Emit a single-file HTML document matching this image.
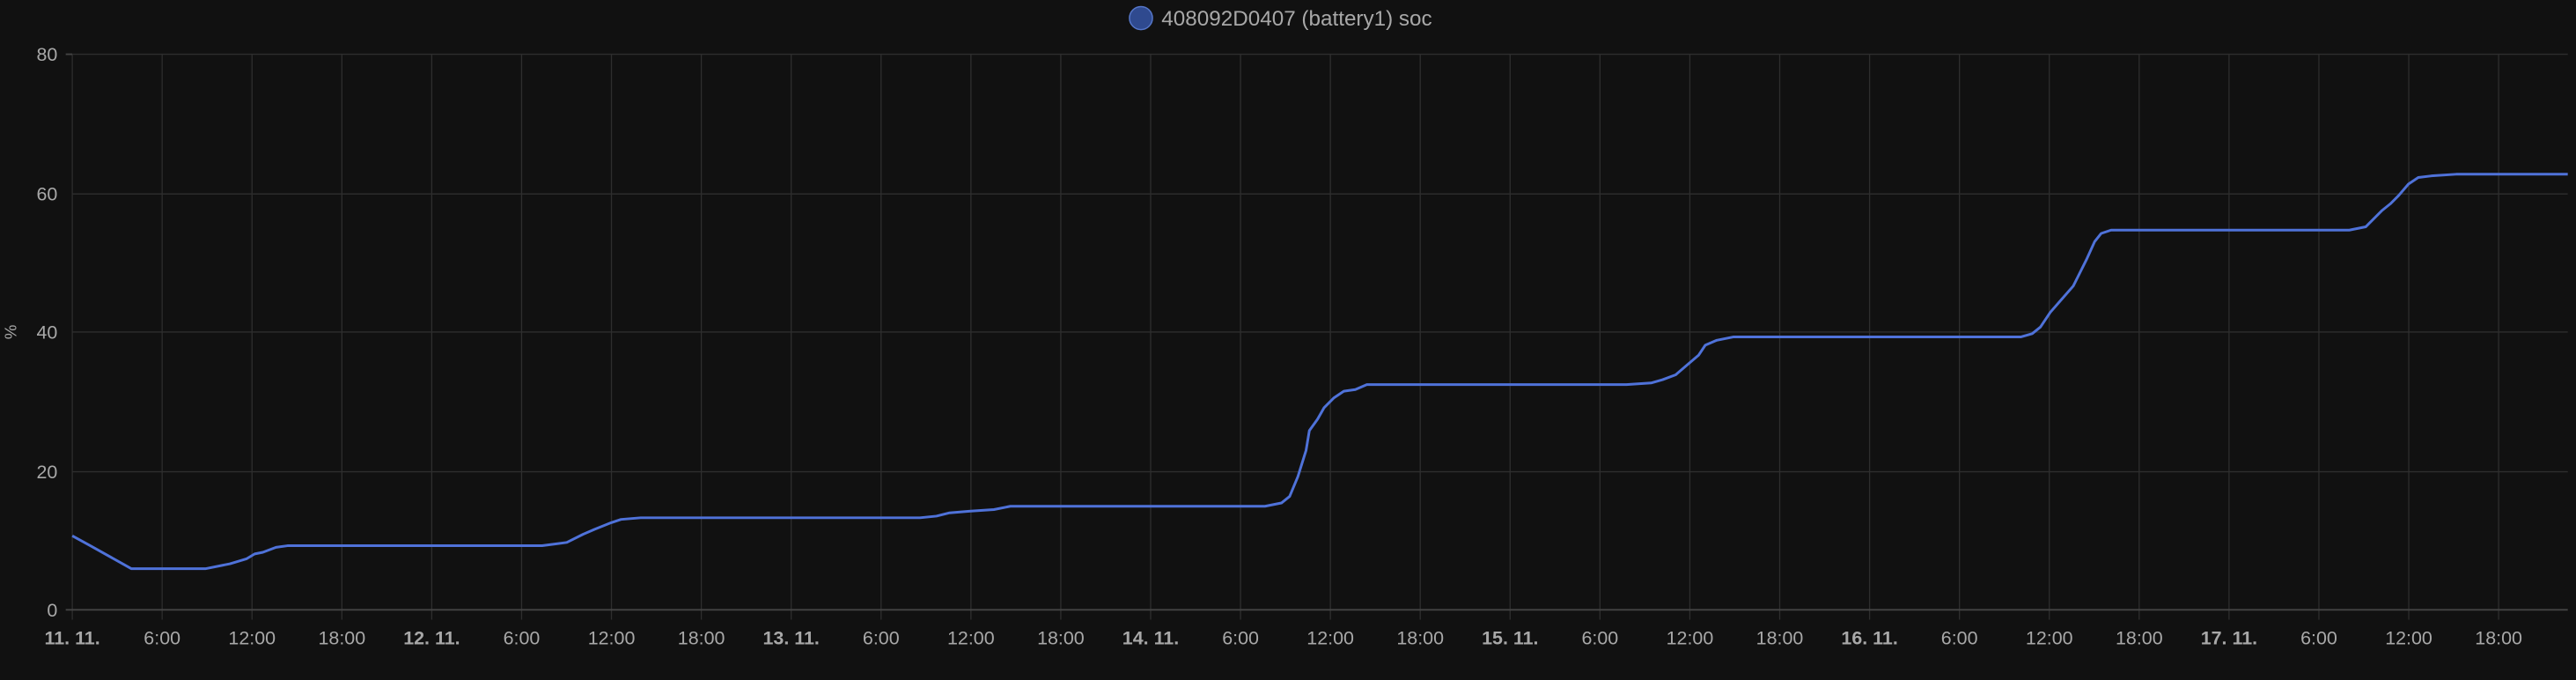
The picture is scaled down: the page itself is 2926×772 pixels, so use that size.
<!DOCTYPE html>
<html><head><meta charset="utf-8"><style>
html,body{margin:0;padding:0;background:#111111;width:2926px;height:772px;overflow:hidden}
svg{display:block}
text{font-family:"Liberation Sans",sans-serif;fill:#a8a8a8}
</style></head><body>
<svg width="2926" height="772" viewBox="0 0 1568 413.7" preserveAspectRatio="none">
<rect width="1568" height="413.7" fill="#111111"/>
<g stroke="#2e2e2e" stroke-width="0.7">
<line x1="44" y1="33" x2="1563" y2="33"/>
<line x1="44" y1="118" x2="1563" y2="118"/>
<line x1="44" y1="202" x2="1563" y2="202"/>
<line x1="44" y1="287" x2="1563" y2="287"/>
<line x1="44" y1="33" x2="44" y2="377"/>
<line x1="98.7" y1="33" x2="98.7" y2="377"/>
<line x1="153.4" y1="33" x2="153.4" y2="377"/>
<line x1="208.1" y1="33" x2="208.1" y2="377"/>
<line x1="262.8" y1="33" x2="262.8" y2="377"/>
<line x1="317.5" y1="33" x2="317.5" y2="377"/>
<line x1="372.2" y1="33" x2="372.2" y2="377"/>
<line x1="426.9" y1="33" x2="426.9" y2="377"/>
<line x1="481.6" y1="33" x2="481.6" y2="377"/>
<line x1="536.3" y1="33" x2="536.3" y2="377"/>
<line x1="591" y1="33" x2="591" y2="377"/>
<line x1="645.7" y1="33" x2="645.7" y2="377"/>
<line x1="700.4" y1="33" x2="700.4" y2="377"/>
<line x1="755.1" y1="33" x2="755.1" y2="377"/>
<line x1="809.8" y1="33" x2="809.8" y2="377"/>
<line x1="864.5" y1="33" x2="864.5" y2="377"/>
<line x1="919.2" y1="33" x2="919.2" y2="377"/>
<line x1="973.9" y1="33" x2="973.9" y2="377"/>
<line x1="1028.6" y1="33" x2="1028.6" y2="377"/>
<line x1="1083.3" y1="33" x2="1083.3" y2="377"/>
<line x1="1138" y1="33" x2="1138" y2="377"/>
<line x1="1192.7" y1="33" x2="1192.7" y2="377"/>
<line x1="1247.4" y1="33" x2="1247.4" y2="377"/>
<line x1="1302.1" y1="33" x2="1302.1" y2="377"/>
<line x1="1356.8" y1="33" x2="1356.8" y2="377"/>
<line x1="1411.5" y1="33" x2="1411.5" y2="377"/>
<line x1="1466.2" y1="33" x2="1466.2" y2="377"/>
<line x1="1520.9" y1="33" x2="1520.9" y2="377"/>
</g>
<line x1="40" y1="371" x2="1563" y2="371" stroke="#444" stroke-width="1"/>
<line x1="40" y1="33" x2="44" y2="33" stroke="#444" stroke-width="1"/>
<g font-size="11.5" text-anchor="end">
<text x="35" y="37">80</text><text x="35" y="122">60</text><text x="35" y="206">40</text><text x="35" y="291">20</text><text x="35" y="375">0</text>
</g>
<text x="10" y="202" font-size="10" transform="rotate(-90 10 202)" text-anchor="middle">%</text>
<g font-size="11.5" text-anchor="middle">
<text x="44" y="392" font-weight="bold">11. 11.</text>
<text x="98.7" y="392">6:00</text><text x="153.4" y="392">12:00</text><text x="208.1" y="392">18:00</text>
<text x="262.8" y="392" font-weight="bold">12. 11.</text>
<text x="317.5" y="392">6:00</text><text x="372.2" y="392">12:00</text><text x="426.9" y="392">18:00</text>
<text x="481.6" y="392" font-weight="bold">13. 11.</text>
<text x="536.3" y="392">6:00</text><text x="591" y="392">12:00</text><text x="645.7" y="392">18:00</text>
<text x="700.4" y="392" font-weight="bold">14. 11.</text>
<text x="755.1" y="392">6:00</text><text x="809.8" y="392">12:00</text><text x="864.5" y="392">18:00</text>
<text x="919.2" y="392" font-weight="bold">15. 11.</text>
<text x="973.9" y="392">6:00</text><text x="1028.6" y="392">12:00</text><text x="1083.3" y="392">18:00</text>
<text x="1138" y="392" font-weight="bold">16. 11.</text>
<text x="1192.7" y="392">6:00</text><text x="1247.4" y="392">12:00</text><text x="1302.1" y="392">18:00</text>
<text x="1356.8" y="392" font-weight="bold">17. 11.</text>
<text x="1411.5" y="392">6:00</text><text x="1466.2" y="392">12:00</text><text x="1520.9" y="392">18:00</text>
</g>
<circle cx="694.5" cy="11" r="7" fill="#2f4a8f" stroke="#5576c8" stroke-width="0.8"/>
<text x="707" y="15.5" font-size="13">408092D0407 (battery1) soc</text>
<polyline fill="none" stroke="#4f72d9" stroke-width="1.6" stroke-linejoin="round" points="44,326 55,332 80,346 125,346 140,343 150,340 155,337 160,336 168,333 175,332 180,332 330,332 345,330 355,325 362,322 372,318 378,316 390,315 560,315 570,314 578,312 590,311 605,310 615,308 770,308 780,306 785,302 790,290 795,274 797,262 802,255 806,248 812,242 818,238 825,237 832,234 990,234 1005,233 1012,231 1020,228 1027,222 1034,216 1038,210 1045,207 1055,205 1230,205 1237,203 1242,199 1248,190 1255,182 1262,174 1265,168 1270,158 1275,147 1279,142 1285,140 1430,140 1440,138 1445,133 1450,128 1455,124 1460,119 1466,112 1472,108 1480,107 1495,106 1563,106"/>
</svg>
</body></html>
